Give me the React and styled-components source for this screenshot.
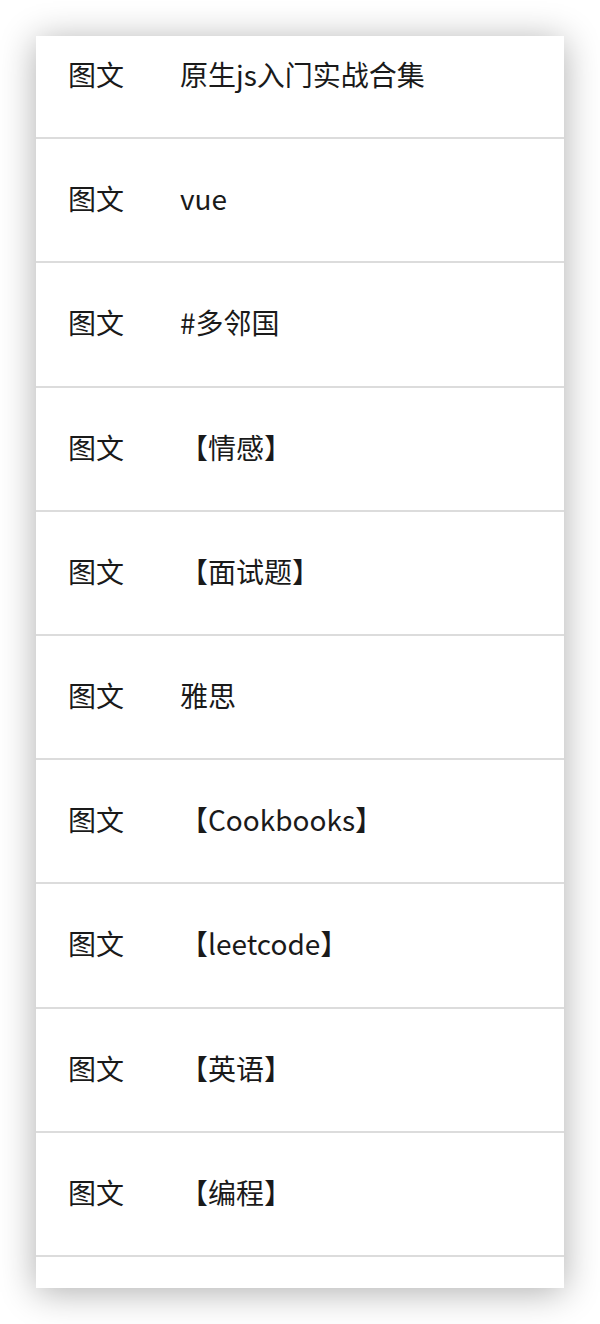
import styled, { createGlobalStyle } from "styled-components"

const items = [
  "原生js入门实战合集",
  "vue",
  "#多邻国",
  "【情感】",
  "【面试题】",
  "雅思",
  "【Cookbooks】",
  "【leetcode】",
  "【英语】",
  "【编程】",
]

const GlobalStyle = createGlobalStyle`
  html, body {
    margin: 0;
    padding: 0;
    background: #fff;
  }
  body {
    font-family: "Noto Sans CJK SC", "Noto Sans", sans-serif;
    color: #1a1a1a;
  }
`

const Page = styled.div`
  width: 600px;
  height: 1324px;
  padding: 36px;
  box-sizing: border-box;
`

const Card = styled.div`
  height: 1252px;
  background: #fff;
  overflow: hidden;
  box-shadow: 0 4px 34px rgba(0, 0, 0, 0.32);
`

const List = styled.ul`
  list-style: none;
  margin: -21px 0 0;
  padding: 0;
`

const Row = styled.li`
  display: flex;
  align-items: center;
  height: 124.2px;
  box-sizing: border-box;
  padding: 0 32px 4px;
  border-bottom: 2px solid #dcdcdc;
  font-size: 28px;
  line-height: 1;
`

const Type = styled.span`
  width: 112px;
  flex-shrink: 0;
`

const Title = styled.span`
  white-space: nowrap;
`

const App = () => {
  return (
    <Page>
      <GlobalStyle />
      <Card>
        <List>
          {items.map((title, i) => (
            <Row key={i}>
              <Type>图文</Type>
              <Title>{title}</Title>
            </Row>
          ))}
        </List>
      </Card>
    </Page>
  )
}

export default App
